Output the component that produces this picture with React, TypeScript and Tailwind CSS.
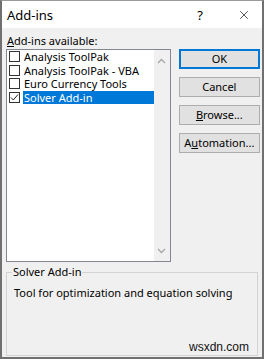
import { X } from 'lucide-react';

const addins = [
  { name: 'Analysis ToolPak', checked: false },
  { name: 'Analysis ToolPak - VBA', checked: false },
  { name: 'Euro Currency Tools', checked: false },
  { name: 'Solver Add-in', checked: true },
];

const Chevron = ({ up }: { up?: boolean }) => (
  <svg width="9" height="6" viewBox="0 0 9 6" className="block">
    <polyline
      points={up ? '1,5 4.5,1.5 8,5' : '1,1 4.5,4.5 8,1'}
      fill="none"
      stroke="#a6a6a6"
      strokeWidth="1.3"
    />
  </svg>
);

const CheckBox = ({ checked }: { checked: boolean }) => (
  <span className="w-[11px] h-[11px] border border-[#333] bg-white shrink-0 flex items-center justify-center">
    {checked && (
      <svg width="9" height="9" viewBox="0 0 9 9">
        <polyline points="1,4.5 3.3,7 8,1.5" fill="none" stroke="#222" strokeWidth="1" />
      </svg>
    )}
  </span>
);

const DlgButton = ({ children, primary }: { children: React.ReactNode; primary?: boolean }) => (
  <button
    className={
      primary
        ? 'h-[20px] w-full bg-[#e1e1e1] border-2 border-[#0078d7] text-[11px] text-black leading-[14px]'
        : 'h-[20px] w-full bg-[#e1e1e1] border border-[#adadad] text-[11px] text-black leading-[14px]'
    }
  >
    {children}
  </button>
);

export default function App() {
  return (
    <div
      className="w-[264px] h-[359px] flex flex-col border-t border-t-[#9a9a9a] border-x-2 border-b-2 border-[#707070] bg-[#f0f0f0] text-[#000]"
      style={{ fontFamily: '"Noto Sans", "Open Sans", sans-serif' }}
    >
      {/* title bar */}
      <div className="h-[27px] bg-white flex items-center pl-[5px] shrink-0">
        <span className="text-[13px] leading-[16px]">Add-ins</span>
        <span className="ml-auto text-[13px] leading-[16px] mr-[34px]">?</span>
        <X size={14} strokeWidth={1.3} className="mr-[11px] text-[#222]" />
      </div>

      <div className="flex-1 flex flex-col px-[2px] pt-[6px] pb-[1px]">
        <div className="text-[11px] leading-[14px] pl-[3px]">
          <u>A</u>dd-ins available:
        </div>

        <div className="flex mt-[1px] items-start">
          {/* list box */}
          <div className="w-[166px] h-[213px] ml-[2px] border border-[#828790] bg-white flex">
            <ul className="flex-1 flex flex-col">
              {addins.map((a) => (
                <li key={a.name} className="h-[13.5px] flex items-center pl-[2px]">
                  <CheckBox checked={a.checked} />
                  <span
                    className={
                      a.checked
                        ? 'flex-1 ml-[3px] pl-[1px] bg-[#0078d7] text-white text-[11px] leading-[13px]'
                        : 'flex-1 ml-[3px] pl-[1px] text-[11px] leading-[13px]'
                    }
                  >
                    {a.name}
                  </span>
                </li>
              ))}
            </ul>
            <div className="w-[16px] bg-[#f0f0f0] flex flex-col items-center justify-between pt-[8px] pb-[7px]">
              <Chevron up />
              <Chevron />
            </div>
          </div>

          {/* buttons */}
          <div className="w-[82px] ml-[8px] flex flex-col gap-[8px]">
            <DlgButton primary>OK</DlgButton>
            <DlgButton>Cancel</DlgButton>
            <DlgButton>
              <u>B</u>rowse...
            </DlgButton>
            <DlgButton>
              A<u>u</u>tomation...
            </DlgButton>
          </div>
        </div>

        {/* description group */}
        <fieldset className="flex-1 mt-[3px] ml-[2px] mr-[2px] border border-[#d3d3d3] px-[5px] flex flex-col">
          <legend className="px-[1px] text-[11px] leading-[14px]">Solver Add-in</legend>
          <div className="text-[11px] leading-[14px] pl-[2px] mt-[7px]">
            Tool for optimization and equation solving
          </div>
          <div
            className="mt-auto self-end mr-[3px] mb-[1px] text-[12px] leading-[14px] text-[#111]"
            style={{ fontFamily: '"Liberation Sans", Arial, sans-serif' }}
          >
            wsxdn.com
          </div>
        </fieldset>
      </div>
    </div>
  );
}
